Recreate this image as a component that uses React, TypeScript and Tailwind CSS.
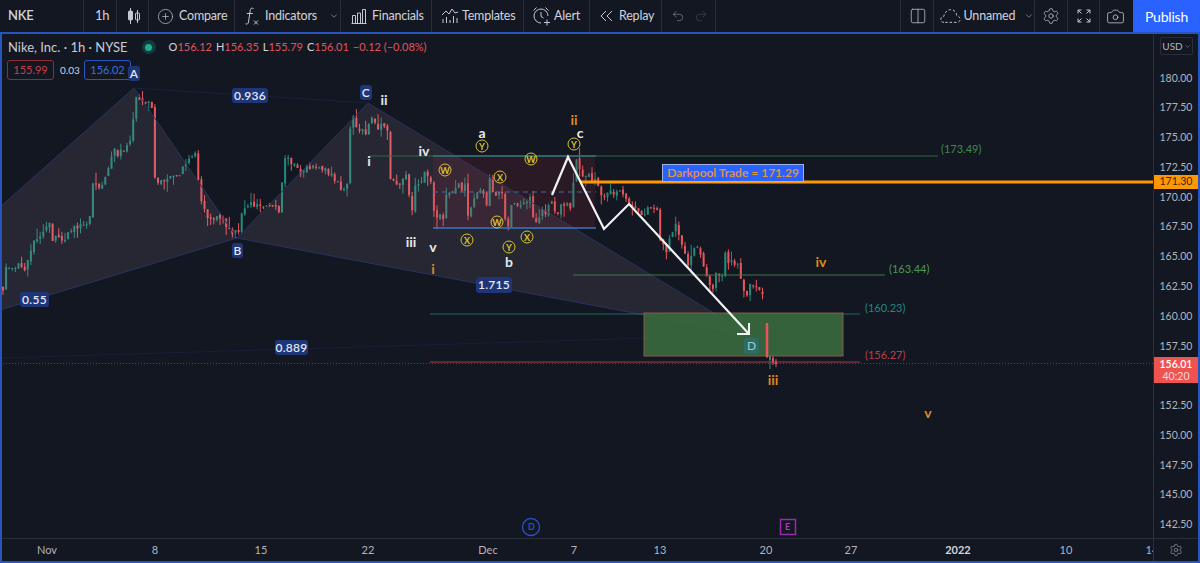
import React from "react";
import { ChevronDown, CirclePlus, Undo2, Redo2, Settings, Camera, Columns2 } from "lucide-react";

const W: [number, number][] = [
  [3,287],[5,268],[13,270],[23,265],[27,280],[28,253],[33,243],[42,240],[47,223],[50,227],[53,240],[67,242],[70,227],[88,223],[90,212],[91,180],[100,192],[107,168],[111,172],[112,143],[117,157],[127,145],[133,130],[134,95],[143,103],[152,108],[154,120],[155,187],[163,177],[173,175],[177,180],[187,163],[195,152],[198,183],[205,212],[212,223],[218,217],[238,235],[241,213],[247,205],[263,203],[267,208],[281,212],[283,162],[287,152],[298,173],[305,168],[333,173],[340,188],[347,187],[348,140],[352,115],[362,133],[367,138],[370,113],[378,130],[387,125],[388,147],[390,180],[400,183],[407,175],[412,215],[415,183],[430,170],[433,210],[443,220],[445,193],[457,187],[466,187],[467,220],[473,197],[480,187],[487,203],[488,172],[493,190],[503,197],[507,230],[513,197],[518,207],[530,195],[532,213],[535,227],[540,213],[547,213],[550,195],[557,215],[565,200],[570,210],[573,190],[577,160],[583,173],[595,182],[603,197],[613,190],[623,197],[640,217],[647,208],[658,208],[660,240],[665,252],[675,225],[683,253],[688,263],[697,247],[702,257],[712,290],[717,270],[723,277],[725,250],[730,265],[737,258],[742,283],[745,300],[750,287],[760,290],[763,297],
];

function interp(x: number) {
  for (let i = 1; i < W.length; i++) {
    if (x <= W[i][0]) {
      const [x0, y0] = W[i - 1];
      const [x1, y1] = W[i];
      return y0 + ((y1 - y0) * (x - x0)) / Math.max(0.01, x1 - x0);
    }
  }
  return W[W.length - 1][1];
}

let seed = 17;
const rnd = () => {
  seed = (seed * 9301 + 49297) % 233280;
  return seed / 233280;
};

const candles: { x: number; o: number; c: number; h: number; l: number }[] = [];
{
  let prev = 287;
  for (let x = 3; x <= 763; x += 3.1) {
    const c = interp(x) + (rnd() - 0.5) * 9;
    const h = Math.min(prev, c) - rnd() * rnd() * 12;
    const l = Math.max(prev, c) + rnd() * rnd() * 12;
    candles.push({ x, o: prev, c, h, l });
    prev = c + (rnd() - 0.5) * 3;
  }
  candles.push({ x: 767, o: 324, c: 357, h: 323, l: 358 });
  candles.push({ x: 770, o: 360, c: 356, h: 352, l: 369 });
  candles.push({ x: 773, o: 358, c: 363, h: 353, l: 365 });
  candles.push({ x: 776, o: 361, c: 364, h: 359, l: 367 });
}

const pills = [
  { t: "A", x: 128, y: 66, w: 12, h: 15 },
  { t: "C", x: 360, y: 85, w: 12, h: 15 },
  { t: "B", x: 232, y: 243, w: 11, h: 15 },
  { t: "0.936", x: 232, y: 88, w: 36, h: 15 },
  { t: "0.55", x: 20, y: 292, w: 29, h: 15 },
  { t: "1.715", x: 476, y: 277, w: 36, h: 16 },
  { t: "0.889", x: 275, y: 340, w: 33, h: 15 },
];

const waves = [
  { t: "ii", x: 384, y: 100, c: "text-[#e8e8ea]" },
  { t: "i", x: 369, y: 161, c: "text-[#e8e8ea]" },
  { t: "iv", x: 424, y: 151, c: "text-[#e8e8ea]" },
  { t: "iii", x: 411, y: 242, c: "text-[#e8e8ea]" },
  { t: "v", x: 433, y: 247, c: "text-[#e8e8ea]" },
  { t: "a", x: 482, y: 133, c: "text-[#e8e8ea]" },
  { t: "b", x: 509, y: 262, c: "text-[#e8e8ea]" },
  { t: "c", x: 580, y: 133, c: "text-[#e8e8ea]" },
  { t: "i", x: 433, y: 269, c: "text-[#d98a1e]" },
  { t: "ii", x: 574, y: 120, c: "text-[#d98a1e]" },
  { t: "iv", x: 821, y: 262, c: "text-[#d98a1e]" },
  { t: "iii", x: 773, y: 380, c: "text-[#d98a1e]" },
  { t: "v", x: 928, y: 413, c: "text-[#d98a1e]" },
];

const circles = [
  { t: "Y", x: 482, y: 146 },
  { t: "W", x: 445, y: 170 },
  { t: "X", x: 500, y: 177 },
  { t: "W", x: 531, y: 159 },
  { t: "W", x: 497, y: 222 },
  { t: "X", x: 467, y: 240 },
  { t: "Y", x: 509, y: 247 },
  { t: "X", x: 527, y: 237 },
  { t: "Y", x: 574, y: 144 },
];

const levels = [
  { t: "(173.49)", x: 941, y: 149, c: "text-[#3f8a4e]" },
  { t: "(163.44)", x: 889, y: 269, c: "text-[#4c9a52]" },
  { t: "(160.23)", x: 865, y: 308, c: "text-[#1f8a80]" },
  { t: "(156.27)", x: 865, y: 355, c: "text-[#b5404a]" },
];

const prices = ["180.00","177.50","175.00","172.50","170.00","167.50","165.00","162.50","160.00","157.50","","152.50","150.00","147.50","145.00","142.50"];

const ticks = [
  { t: "Nov", x: 47 }, { t: "8", x: 155 }, { t: "15", x: 261 }, { t: "22", x: 368 },
  { t: "Dec", x: 488 }, { t: "7", x: 574 }, { t: "13", x: 660 }, { t: "20", x: 766 },
  { t: "27", x: 851 }, { t: "2022", x: 958, b: true }, { t: "10", x: 1066 }, { t: "14", x: 1152 },
];

function Sec({ c, children, last }: { c: string; children?: React.ReactNode; last?: boolean }) {
  return (
    <div className={`${c} h-full flex items-center shrink-0 ${last ? "" : "border-r border-[#2a2e39]"}`}>
      {children}
    </div>
  );
}

const ic = "text-[#c4c8d2]";

export default function App() {
  return (
    <div className="w-[1200px] h-[563px] flex flex-col overflow-hidden bg-[#131722] text-[#d1d4dc] [font-family:Lato,'Noto_Sans',sans-serif]">
      {/* toolbar */}
      <div className="h-8 flex items-center text-[12.500px] tracking-[-0.2px] shrink-0">
        <Sec c="w-[84px] pl-2"><span className="font-semibold text-[13px]">NKE</span></Sec>
        <Sec c="w-[33px] pl-[11px]"><span className="text-[13px]">1h</span></Sec>
        <Sec c="w-[32px] pl-[9px]">
          <svg width="16" height="18" viewBox="0 0 16 18" fill="none" stroke="#c4c8d2">
            <path d="M4.500 1v16M11.500 3v13" />
            <rect x="2.500" y="4" width="4" height="9" rx="1" fill="#c4c8d2" />
            <rect x="9.500" y="6" width="4" height="7" rx="1" />
          </svg>
        </Sec>
        <Sec c="w-[86px] pl-2 gap-[5px]"><CirclePlus size={17} strokeWidth={1} className={ic} /><span>Compare</span></Sec>
        <Sec c="w-[106px] pl-[10px] gap-[6px]">
          <svg width="14" height="20" viewBox="0 0 14 20" fill="none" stroke="#c4c8d2" strokeWidth="1">
            <path d="M8.500 2.500c-2-1-3 0-3.300 2L3.500 16c-.3 2-1.500 2.500-3 1.800M1.800 7.500h6" />
            <path d="M9 14.500l4 4M13 14.500l-4 4" />
          </svg>
          <span>Indicators</span>
          <ChevronDown size={10} strokeWidth={1.3} className={`${ic} ml-[6px]`} />
        </Sec>
        <Sec c="w-[91px] pl-[10px] gap-[5px]">
          <svg width="16" height="16" viewBox="0 0 16 16" fill="none" stroke="#c4c8d2" strokeWidth="1">
            <path d="M.5 15.500h15M1.500 15.500v-8h3v8M6.500 15.500V5h3v10.500M11.500 15.500V1.500h3v14" />
          </svg>
          <span>Financials</span>
        </Sec>
        <Sec c="w-[92px] pl-[9px] gap-[3px]">
          <svg width="18" height="16" viewBox="0 0 18 16" fill="none" stroke="#c4c8d2" strokeWidth="1">
            <path d="M1 7l4-4 3 3 3-5 3 4 3-1" />
            <path d="M2 15v-4M5.500 15V9M9 15v-3M12.500 15V8M16 15v-5" />
          </svg>
          <span>Templates</span>
        </Sec>
        <Sec c="w-[66px] pl-2 gap-[3px]">
          <svg width="19" height="20" viewBox="0 0 19 20" fill="none" stroke="#c4c8d2" strokeWidth="1">
            <path d="M9 17a7 7 0 1 1 7-7" />
            <path d="M9 6v4.500l2.500 1.500M1.500 4.500L4.500 1.500M13.500 1.500l3 3M15 13.500v6M12 16.500h6" />
          </svg>
          <span>Alert</span>
        </Sec>
        <Sec c="w-[72px] pl-[10px] gap-[6px]">
          <svg width="13" height="12" viewBox="0 0 13 12" fill="none" stroke="#c4c8d2" strokeWidth="1">
            <path d="M6 1L1 6l5 5M12 1L7 6l5 5" />
          </svg>
          <span>Replay</span>
        </Sec>
        <Sec c="w-[54px] pl-[9px] gap-[9px]">
          <Undo2 size={14} strokeWidth={1} className="text-[#9598a1]" />
          <Redo2 size={14} strokeWidth={1} className="text-[#4a4e59]" />
        </Sec>
        <div className="flex-1 h-full border-r border-[#2a2e39]" />
        <Sec c="w-[33px] pl-2"><Columns2 size={18} strokeWidth={1} className={ic} /></Sec>
        <Sec c="w-[101px] pl-[6px] gap-[3px]">
          <svg width="21" height="16" viewBox="0 0 21 16" fill="none" stroke="#c4c8d2" strokeWidth="1" strokeDasharray="2.500 2">
            <path d="M4 14.500C1.500 14.500.5 12.500.8 11c.3-1.500 1.500-2.500 3-2.500C4.500 5 7 1.500 11 1.500c3.500 0 6 3 6 6 2 .5 3.500 2 3.500 4 0 1.500-1 3-3 3z" />
          </svg>
          <span>Unnamed</span>
          <ChevronDown size={10} strokeWidth={1.3} className={`${ic} ml-[6px]`} />
        </Sec>
        <Sec c="w-[33px] pl-[7px]"><Settings size={18} strokeWidth={1} className={ic} /></Sec>
        <Sec c="w-[32px] pl-[9px]">
          <svg width="14" height="14" viewBox="0 0 14 14" fill="none" stroke="#c4c8d2" strokeWidth="1">
            <path d="M1 4.500V1h3.500M1 1l3.500 3.500M13 4.500V1H9.500M13 1L9.500 4.500M1 9.500V13h3.500M1 13l3.500-3.500M13 9.500V13H9.500M13 13L9.500 9.500" />
          </svg>
        </Sec>
        <Sec c="w-[33px] pl-[6px]" last><Camera size={19} strokeWidth={1} className={ic} /></Sec>
        <div className="w-[67px] h-full bg-[#2962ff] text-white flex items-center justify-center text-[14px] shrink-0">Publish</div>
      </div>

      {/* panel */}
      <div className="flex-1 flex flex-col border-2 border-[#2655c0] min-h-0">
        <div className="flex-1 flex min-h-0">
          <div className="relative flex-1 overflow-hidden">
            <svg viewBox="2 34 1151 504" className="absolute inset-0 w-full h-full">
              {/* candles */}
              {candles.map((k, i) => {
                const col = k.c < k.o ? "#24897a" : "#e9555a";
                return (
                  <g key={i}>
                    <line x1={k.x} x2={k.x} y1={k.h} y2={k.l} stroke={col} strokeWidth="1" />
                    <rect x={k.x - 1} width="2" y={Math.min(k.o, k.c)} height={Math.max(1, Math.abs(k.c - k.o))} fill={col} />
                  </g>
                );
              })}
              {/* harmonic pattern */}
              <polygon points="0,207 134,88 237,238 0,310" fill="#a08ea0" fillOpacity="0.14" />
              <polygon points="237,238 368,103 750,335" fill="#a08ea0" fillOpacity="0.14" />
              <polyline points="0,207 134,88 237,238 368,103 750,335 237,238 0,310" fill="none" stroke="#27345f" strokeWidth="1" />
              <line x1="134" y1="88" x2="368" y2="103" stroke="#18213f" strokeWidth="1" />
              <line x1="0" y1="358" x2="750" y2="335" stroke="#171f3a" strokeWidth="1" />
              {/* red box */}
              <rect x="433" y="156" width="162" height="72" fill="#c0303c" fillOpacity="0.13" />
              <line x1="433" x2="596" y1="156" y2="156" stroke="#3f73c0" strokeWidth="1.500" />
              <line x1="433" x2="596" y1="228" y2="228" stroke="#3f73c0" strokeWidth="1.500" />
              <line x1="433" x2="596" y1="192" y2="192" stroke="#4a6a9a" strokeWidth="1" strokeDasharray="5 4" />
              {/* levels */}
              <line x1="370" x2="938" y1="156" y2="156" stroke="#2e6b3e" strokeWidth="1" />
              <line x1="573" x2="885" y1="275" y2="275" stroke="#3f7a45" strokeWidth="1" />
              <line x1="430" x2="860" y1="314" y2="314" stroke="#1e6a62" strokeWidth="1" />
              <line x1="430" x2="860" y1="362" y2="362" stroke="#a83a42" strokeWidth="1" />
              <line x1="0" x2="1153" y1="363.500" y2="363.500" stroke="#8a3138" strokeWidth="1" strokeDasharray="1 2" />
              {/* green zone */}
              <rect x="644" y="313" width="199" height="43" fill="#38663d" fillOpacity="0.95" stroke="#8a5a46" strokeWidth="1" />
              <line x1="767" x2="767" y1="323" y2="357" stroke="#e9555a" strokeWidth="2.500" />
              {/* orange */}
              <line x1="580" x2="1153" y1="182" y2="182" stroke="#ff9800" strokeWidth="3" />
              {/* arrow */}
              <polyline points="552,195 568,157 604,229 629,204 749,334" fill="none" stroke="#f2f2f2" strokeWidth="2.200" />
              <polyline points="737,334 749,334 749,323" fill="none" stroke="#f2f2f2" strokeWidth="2" />
              {/* events */}
              <circle cx="531" cy="527" r="8.500" fill="none" stroke="#2453c4" strokeWidth="1.300" />
              <rect x="780.500" y="519.500" width="15" height="15" fill="none" stroke="#9c27b0" strokeWidth="1.500" />
            </svg>

            {/* legend */}
            <div className="absolute left-[6px] top-[4px] flex items-center leading-[18px]">
              <span className="text-[#c8ccd6] text-[13px]">Nike, Inc. · 1h · NYSE</span>
              <span className="ml-[14px] mr-[13px] w-[14px] h-[14px] rounded-full bg-[#123c3a] flex items-center justify-center">
                <span className="w-[7px] h-[7px] rounded-full bg-[#22ab94]" />
              </span>
              <div className="flex gap-[4px] text-[11px] text-[#e0555a]">
                <span><span className="text-[#d1d4dc]">O</span>156.12</span>
                <span><span className="text-[#d1d4dc]">H</span>156.35</span>
                <span><span className="text-[#d1d4dc]">L</span>155.79</span>
                <span><span className="text-[#d1d4dc]">C</span>156.01</span>
                <span>−0.12 (−0.08%)</span>
              </div>
            </div>
            <div className="absolute left-[5px] top-[26px] flex items-center gap-[6px] text-[11px]">
              <span className="w-[47px] h-[20px] flex items-center justify-center rounded-[3px] border border-[#8f2b33] text-[#c8404a]">155.99</span>
              <span className="text-[#d1d4dc] text-[10px] w-[18px] text-center">0.03</span>
              <span className="w-[47px] h-[20px] flex items-center justify-center rounded-[3px] border border-[#2655c0] text-[#3a6fe0]">156.02</span>
            </div>

            {/* pills */}
            {pills.map((p, i) => (
              <div
                key={i}
                className="absolute flex items-center justify-center rounded-[3px] bg-[#1e3578] text-[#e4e8f4] text-[12px] font-semibold tracking-[0.3px]"
                style={{ left: p.x - 2, top: p.y - 34, width: p.w, height: p.h }}
              >
                {p.t}
              </div>
            ))}
            <div className="absolute left-[742px] top-[304px] w-[15px] h-[16px] rounded-[3px] bg-[#2e6b66] text-[#9dcfc6] text-[12px] flex items-center justify-center">D</div>

            {/* waves */}
            {waves.map((p, i) => (
              <div
                key={i}
                className={`absolute -translate-x-1/2 -translate-y-1/2 text-[14px] leading-none font-bold ${p.c}`}
                style={{ left: p.x - 2, top: p.y - 34 }}
              >
                {p.t}
              </div>
            ))}
            {circles.map((p, i) => (
              <div
                key={i}
                className="absolute -translate-x-1/2 -translate-y-1/2 w-[13px] h-[13px] rounded-full border border-[#d8c42e] text-[#d8c42e] text-[9px] font-bold flex items-center justify-center leading-none"
                style={{ left: p.x - 2, top: p.y - 34 }}
              >
                {p.t}
              </div>
            ))}
            {levels.map((p, i) => (
              <div
                key={i}
                className={`absolute -translate-y-1/2 text-[11px] leading-[14px] ${p.c}`}
                style={{ left: p.x - 2, top: p.y - 34 }}
              >
                {p.t}
              </div>
            ))}

            {/* darkpool */}
            <div className="absolute left-[660px] top-[130px] w-[142px] h-[18px] bg-[#2962ff] border border-[#9db4e8] text-[#e5963c] text-[12px] font-semibold flex items-center justify-center whitespace-nowrap">
              Darkpool Trade = 171.29
            </div>

            {/* events */}
            <div className="absolute left-[524px] top-[487px] w-[11px] text-center text-[9px] leading-[12px] font-bold text-[#2453c4]">D</div>
            <div className="absolute left-[780px] top-[487px] w-[11px] text-center text-[9px] leading-[12px] font-bold text-[#b03ac4]">E</div>
          </div>

          {/* price axis */}
          <div className="relative w-[45px] border-l border-[#2a2e39] text-[10.500px] text-[#b2b5be] shrink-0">
            <div className="absolute left-[6px] top-[3px] w-[33px] h-[18px] border border-[#2a2e39] rounded-[2px] flex items-center justify-center text-[10px] gap-[1px]">
              USD<ChevronDown size={7} strokeWidth={1.5} />
            </div>
            <div className="pt-[29px] flex flex-col items-center">
              {prices.map((p, i) => (
                <div key={i} className="h-[29.770px] flex items-center justify-center leading-none">{p}</div>
              ))}
            </div>
            <div className="absolute left-0 top-[141px] w-[44px] h-[14px] bg-[#ff9800] text-[#3a2a10] flex items-center justify-center">171.30</div>
            <div className="absolute left-0 top-[323px] w-[44px] h-[26px] bg-[#ef5350] text-white flex flex-col items-center justify-center leading-[12.500px]">
              <span className="font-semibold">156.01</span>
              <span className="text-[#f8dada]">40:20</span>
            </div>
          </div>
        </div>

        {/* time axis */}
        <div className="h-[23px] border-t border-[#2a2e39] flex shrink-0 text-[11px] text-[#b2b5be]">
          <div className="relative flex-1 overflow-hidden">
            {ticks.map((t) => (
              <span
                key={t.t}
                className={`absolute top-[4px] -translate-x-1/2 leading-[14px] ${t.b ? "font-bold text-[#d1d4dc]" : ""}`}
                style={{ left: t.x - 2 }}
              >
                {t.t}
              </span>
            ))}
          </div>
          <div className="w-[45px] border-l border-[#2a2e39] flex items-center justify-center">
            <Settings size={14} strokeWidth={1} />
          </div>
        </div>
      </div>
    </div>
  );
}
